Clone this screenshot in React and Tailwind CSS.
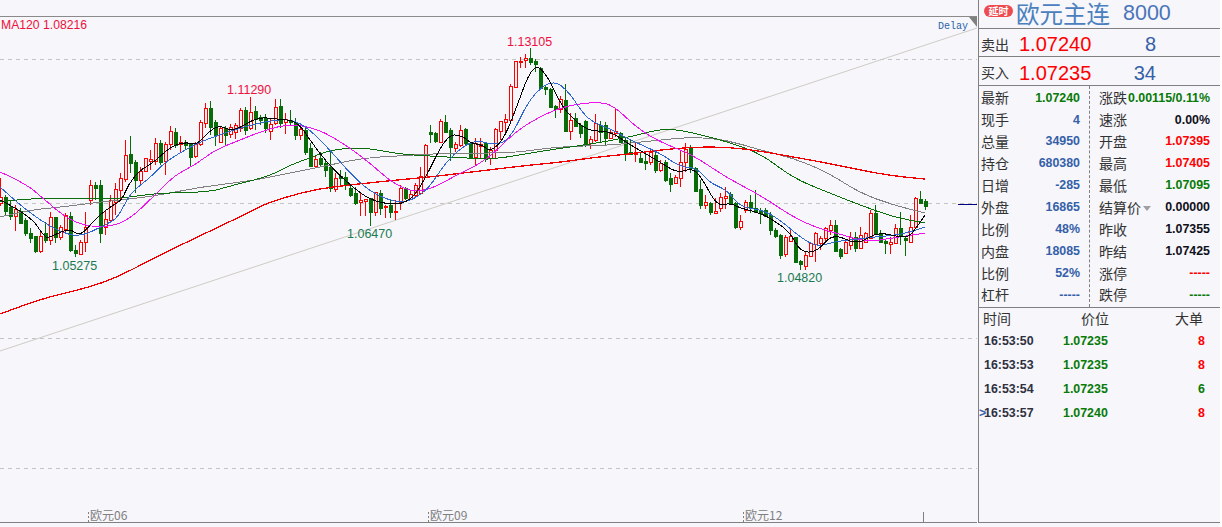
import React from 'react';

const BG = '#f6f6fb';
const RED = '#ff0000';
const GREEN = '#086c08';

// [r/g, wick top, body top, body bottom, wick bottom], one every 5px from x=0
const candles = [
  ['r',178,197,203,206],['g',195,197,211,215],['g',200,207,216,220],['r',205,209,216,231],['g',208,211,223,224],
  ['g',218,220,233,236],['g',228,233,238,243],['g',236,236,251,253],['r',230,236,251,253],['g',222,233,240,243],
  ['r',212,217,240,245],['g',217,217,237,243],['r',225,227,237,240],['r',213,215,229,232],['g',212,216,250,252],
  ['g',245,250,253,257],['r',240,242,254,254],['r',212,227,242,252],['r',180,185,200,205],['g',182,185,188,200],
  ['g',180,185,233,243],['r',210,219,227,235],['r',195,200,220,222],['r',183,189,202,215],['r',173,178,190,200],
  ['r',140,155,179,182],['g',136,154,163,173],['g',160,162,180,193],['r',167,171,180,186],['r',158,158,171,172],
  ['r',150,159,161,170],['r',138,143,161,165],['g',140,143,162,165],['r',142,144,161,175],['r',126,131,144,150],
  ['g',128,132,145,148],['r',136,142,144,152],['g',140,142,145,150],['g',143,144,157,166],['r',142,144,156,158],
  ['r',120,122,144,146],['r',103,108,123,128],['g',101,108,127,135],['g',120,122,135,146],['r',126,128,142,143],
  ['g',126,128,135,145],['r',124,127,134,138],['r',123,125,132,139],['r',108,110,128,132],['g',107,110,130,135],
  ['r',97,112,128,130],['g',106,111,119,130],['g',115,117,120,125],['g',114,118,128,133],['r',118,124,131,140],
  ['r',99,107,123,125],['g',99,106,123,128],['r',113,119,122,134],['g',110,120,122,125],['g',118,122,135,140],
  ['r',126,129,135,140],['g',126,130,152,155],['g',143,148,166,167],['r',155,159,166,167],['g',152,158,164,167],
  ['g',160,163,170,177],['g',152,167,188,192],
  ['r',173,178,189,192],['g',170,176,178,187],['g',172,177,185,190],['g',185,188,195,197],['g',187,193,203,205],
  ['r',193,200,202,216],['r',199,199,201,216],['g',198,198,212,226],['r',192,192,212,216],['g',190,193,208,215],
  ['r',205,206,207,218],['g',199,205,212,218],['r',200,211,212,220],['r',185,188,202,210],['g',187,188,198,200],
  ['r',190,194,199,200],['r',183,185,195,197],['r',167,176,193,195],['r',144,145,177,178],['g',125,132,134,143],
  ['g',132,133,141,143],['r',119,121,142,143],['g',115,122,132,133],['g',128,130,147,161],['r',142,144,148,152],
  ['r',125,130,145,147],['g',128,129,143,145],['g',142,143,157,158],['r',138,143,157,165],['r',138,144,146,158],
  ['g',143,143,159,162],['r',147,150,158,165],['r',128,129,150,158],['r',121,121,131,140],['r',114,119,122,133],
  ['r',84,86,120,121],['r',61,61,87,88],['r',57,61,62,68],['r',54,58,60,68],['g',48,58,62,65],
  ['g',59,61,64,72],['g',67,68,88,89],['g',85,87,89,95],['g',88,89,107,108],['g',105,106,109,118],
  ['r',96,99,109,113],['g',84,100,131,132],['r',113,120,131,140],['g',113,118,126,127],['g',123,125,133,138],
  ['g',120,121,143,147],['r',136,139,143,149],['r',114,123,140,142],['g',121,125,132,143],['g',122,125,138,145],
  ['r',129,132,138,139],['r',109,131,133,137],['g',132,133,142,143],['g',138,140,153,161],['g',140,152,154,155],
  ['r',143,152,154,162],['g',153,158,162,163],['g',152,161,163,170],['r',150,152,162,165],['g',152,155,170,173],
  ['r',160,163,170,172],['g',160,162,180,182],['g',173,178,184,192],['r',175,177,183,184],['r',150,162,178,187],
  ['r',143,149,162,172],['g',145,148,168,173],['g',167,168,191,191],['g',180,189,205,209],['r',195,202,205,209],
  ['g',202,203,212,215],['r',198,211,213,213],['r',193,197,208,212],['r',187,196,198,209],['g',192,194,204,205],
  ['g',202,203,227,229],['r',215,221,227,230],['r',200,202,210,213],['g',195,202,207,213],['g',190,208,212,213],
  ['g',208,211,213,224],['g',208,210,216,217],['g',212,215,230,235],['g',228,230,236,238],['g',234,235,255,259],
  ['r',235,237,254,257],['r',230,236,241,242],['g',237,237,262,262],['g',260,261,264,270],['r',252,255,266,270],
  ['r',242,243,256,257],['r',232,233,244,262],['r',236,238,243,250],['r',227,228,238,243],['r',220,225,230,235],
  ['g',220,225,251,252],['g',248,249,256,259],['r',241,242,253,253],['r',232,237,245,250],['g',232,237,248,252],
  ['r',227,235,248,249],['r',232,233,242,243],['r',210,213,238,239],['g',205,213,234,235],['g',230,234,242,243],
  ['g',240,241,243,254],['r',237,242,244,254],['r',224,228,243,243],['g',212,228,236,245],['g',237,238,240,256],
  ['r',215,227,242,243],['r',197,198,227,227],['g',191,199,203,203],['g',199,201,206,210],
];

// rounds the corners: quadratic curve through the midpoints
const curve = (p) => {
  let d = `M${p[0][0]} ${p[0][1]}`;
  for (let i = 1; i < p.length - 1; i++) {
    const mx = (p[i][0] + p[i + 1][0]) / 2;
    const my = (p[i][1] + p[i + 1][1]) / 2;
    d += ` Q${p[i][0]} ${p[i][1]} ${mx} ${my}`;
  }
  const last = p[p.length - 1];
  return `${d} L${last[0]} ${last[1]}`;
};

const ma120 = [[0,314],[40,299],[75,291],[112,280],[160,255],[210,231],[250,212],[267,203],[300,193],[330,187],[397,180],[430,177],[463,173],[497,169],[530,165],[563,162],[597,157],[630,154],[660,150],[693,147],[727,147],[760,151],[793,157],[827,163],[860,170],[893,176],[925,179]];
const maGray = [[0,217],[30,210],[62,207],[100,202],[150,197],[200,187],[250,181],[280,175],[330,165],[363,158],[397,156],[430,154],[463,153],[513,153],[547,148],[580,146],[613,145],[660,140],[693,137],[727,140],[760,150],[793,158],[827,172],[860,193],[893,205],[925,213]];
const maGreen = [[0,202],[13,200],[50,198],[70,198],[85,199],[110,199],[130,197],[160,193],[210,192],[230,186],[270,176],[290,165],[310,158],[330,150],[363,147],[397,154],[430,156],[463,158],[497,159],[530,153],[563,148],[597,143],[630,137],[660,129],[680,130],[710,137],[727,142],[760,153],[793,178],[827,192],[860,205],[893,217],[925,223]];
const maPink = [[0,172],[25,183],[45,200],[65,217],[85,226],[110,227],[130,219],[155,195],[175,175],[195,165],[215,150],[240,140],[265,130],[290,124],[310,127],[330,135],[363,157],[397,187],[423,193],[457,175],[487,160],[517,130],[547,113],[570,105],[597,102],[613,105],[637,128],[660,142],[693,155],[727,178],[760,195],[793,217],[817,228],[843,235],[867,242],[893,238],[925,233]];
const maBlue = [[0,187],[20,205],[40,220],[60,232],[80,237],[105,225],[118,218],[130,193],[150,178],[165,162],[190,147],[205,140],[225,133],[250,125],[285,118],[305,125],[330,150],[347,170],[370,192],[397,203],[413,200],[430,187],[447,160],[473,139],[493,145],[510,140],[530,97],[553,79],[570,93],[587,120],[613,130],[630,140],[660,153],[680,167],[697,168],[710,183],[727,190],[740,207],[763,210],[780,220],[800,237],[817,247],[833,242],[850,240],[873,237],[900,235],[925,227]];
const maBlack = [[0,200],[30,215],[45,238],[50,237],[70,228],[80,237],[97,217],[113,205],[122,200],[128,185],[140,170],[153,163],[170,147],[185,142],[197,145],[208,132],[220,125],[233,132],[257,117],[277,119],[297,121],[310,140],[327,163],[350,185],[370,200],[393,205],[410,201],[423,183],[447,134],[463,136],[470,143],[483,145],[490,152],[503,140],[513,117],[533,62],[547,75],[557,97],[567,113],[587,131],[610,131],[627,143],[660,162],[677,173],[693,168],[703,180],[717,206],[730,203],[740,208],[760,213],[773,220],[790,232],[800,252],[817,252],[833,233],[857,245],[877,232],[900,237],[910,237],[925,215]];

function Chart() {
  return (
    <svg width="977" height="527" className="block font-['Liberation_Sans',sans-serif]">
      <line x1="0" y1="16.5" x2="977" y2="16.5" stroke="#8a8a8a" />
      {[59.5, 203.5, 338.5, 468.5].map((y) => (
        <line key={y} x1="0" y1={y} x2="977" y2={y} stroke="#c4c4c4" strokeDasharray="4 4" />
      ))}
      <line x1="0" y1="351" x2="977" y2="28" stroke="#cfcbc4" />
      <polygon points="969,17 977,17 977,27" fill="#808080" />

      <g shapeRendering="crispEdges">
        {candles.map(([c, wt, bt, bb, wb], i) => {
          const x = i * 5 + 0.5;
          const col = c === 'r' ? RED : GREEN;
          return (
            <g key={i}>
              <line x1={x} y1={wt} x2={x} y2={wb} stroke={col} />
              <rect x={x - 1.5} y={bt + 0.5} width="3" height={bb - bt} fill={c === 'r' ? BG : GREEN} stroke={col} />
            </g>
          );
        })}
      </g>

      <g fill="none" shapeRendering="crispEdges">
        <path d={curve(maGray)} stroke="#808080" />
        <path d={curve(maGreen)} stroke="#0a6e0a" />
        <path d={curve(ma120)} stroke="#f00000" strokeWidth="1.3" />
        <path d={curve(maPink)} stroke="#f010f0" />
        <path d={curve(maBlue)} stroke="#2f66d0" />
        <path d={curve(maBlack)} stroke="#000000" />
      </g>

      <text x="1" y="29" fontSize="12.2" fill="#f0103c">MA120 1.08216</text>
      <text x="938" y="29" fontSize="10" fill="#2a62a8" className="font-['Liberation_Mono',monospace]">Delay</text>
      <text x="227" y="94" fontSize="12.5" fill="#f0103c">1.11290</text>
      <text x="507" y="46" fontSize="12.5" fill="#f0103c">1.13105</text>
      <text x="52" y="270" fontSize="12.5" fill="#1b7a50">1.05275</text>
      <text x="347" y="238" fontSize="12.5" fill="#1b7a50">1.06470</text>
      <text x="777" y="282" fontSize="12.5" fill="#1b7a50">1.04820</text>

      <line x1="958" y1="204.5" x2="977" y2="204.5" stroke="#000080" />

      {[[88, '欧元06'], [428, '欧元09'], [743, '欧元12']].map(([x, t]) => (
        <g key={x}>
          <line x1={x + 0.5} y1="512" x2={x + 0.5} y2="522" stroke="#808080" strokeDasharray="2 2" />
          <text x={x + 2} y="520" fontSize="12" fill="#808080" className="font-['Noto_Sans_CJK_SC',sans-serif]">{t}</text>
        </g>
      ))}
      <line x1="923.5" y1="512" x2="923.5" y2="522" stroke="#808080" />
      <line x1="0" y1="522.5" x2="977" y2="522.5" stroke="#808080" />
    </svg>
  );
}

function Cell({ label, value, color, extra }) {
  return (
    <div className="flex h-[21.9px] items-center justify-between whitespace-nowrap">
      <span className="flex items-center text-[14px] text-[#333]">
        {label}
        {extra}
      </span>
      <span className={`font-['Liberation_Sans',sans-serif] text-[12.4px] font-bold ${color}`}>{value}</span>
    </div>
  );
}

const BLUE = 'text-[#3560a8]';
const UP = 'text-[#ff0000]';
const DOWN = 'text-[#087a08]';
const BLK = 'text-[#10101a]';

const leftRows = [
  ['最新', '1.07240', DOWN], ['现手', '4', BLUE], ['总量', '34950', BLUE], ['持仓', '680380', BLUE], ['日增', '-285', BLUE],
  ['外盘', '16865', BLUE], ['比例', '48%', BLUE], ['内盘', '18085', BLUE], ['比例', '52%', BLUE], ['杠杆', '-----', BLUE],
];
const rightRows = [
  ['涨跌', '0.00115/0.11%', DOWN], ['速涨', '0.00%', BLK], ['开盘', '1.07395', UP], ['最高', '1.07405', UP], ['最低', '1.07095', DOWN],
  ['结算价', '0.00000', BLK], ['昨收', '1.07355', BLK], ['昨结', '1.07425', BLK], ['涨停', '-----', UP], ['跌停', '-----', DOWN],
];
const ticks = [
  ['16:53:50', '1.07235', '8', UP], ['16:53:53', '1.07235', '8', UP], ['16:53:54', '1.07235', '6', DOWN], ['16:53:57', '1.07240', '8', UP],
];

function QuotePanel() {
  return (
    <div className="flex h-[523px] w-[242px] flex-col border-l border-b border-[#808080] font-['Noto_Sans_CJK_SC',sans-serif]">
      <div className="flex h-[29px] items-center border-b border-[#808080] pl-[5px]">
        <span className="mb-[7px] flex h-[12px] w-[29px] items-center justify-center rounded-full bg-[#ee4b50] text-[10px] leading-none font-bold text-white">延时</span>
        <span className="ml-[3px] pb-[2px] text-[23.5px] leading-[26px] text-[#4a80bd]">欧元主连</span>
        <span className="ml-[13px] pb-[2px] font-['Liberation_Sans',sans-serif] text-[21.5px] leading-[26px] text-[#4a74b8]">8000</span>
      </div>

      <div className="flex h-[28px] items-center border-b border-[#808080] pt-[3px] pl-[2px]">
        <span className="w-[38px] text-[14px] text-[#333]">卖出</span>
        <span className="w-[84px] font-['Liberation_Sans',sans-serif] text-[20px] text-[#ff0000]">1.07240</span>
        <span className="w-[53px] text-right font-['Liberation_Sans',sans-serif] text-[20px] text-[#3560a8]">8</span>
      </div>
      <div className="flex h-[29px] items-center border-b border-[#808080] pt-[3px] pl-[2px]">
        <span className="w-[38px] text-[14px] text-[#333]">买入</span>
        <span className="w-[84px] font-['Liberation_Sans',sans-serif] text-[20px] text-[#ff0000]">1.07235</span>
        <span className="w-[53px] text-right font-['Liberation_Sans',sans-serif] text-[20px] text-[#3560a8]">34</span>
      </div>

      <div className="flex h-[222px] border-b border-[#808080]">
        <div className="w-[111px] border-r border-dashed border-[#808080] pt-px pr-[9px] pl-[2px]">
          {leftRows.map(([l, v, c], i) => <Cell key={i} label={l} value={v} color={c} />)}
        </div>
        <div className="w-[120px] pt-px pl-[9px]">
          {rightRows.map(([l, v, c]) => (
            <Cell
              key={l}
              label={l}
              value={v}
              color={c}
              extra={l === '结算价' ? <span className="ml-[2px] mt-[3px] h-0 w-0 border-x-[4px] border-t-[5px] border-x-transparent border-t-[#a0a0a0]" /> : null}
            />
          ))}
        </div>
      </div>

      <div className="flex h-[21px] items-center pl-[4px] text-[14px] text-[#333]">
        <span className="w-[98px]">时间</span>
        <span className="w-[94px]">价位</span>
        <span>大单</span>
      </div>
      {ticks.map(([t, p, n, c], i) => (
        <div key={t} className="relative flex h-[24px] items-center pl-[5px] font-['Liberation_Sans',sans-serif] text-[12.4px] font-bold">
          {i === 3 && <span className="absolute left-0 text-[#3560a8]">&gt;</span>}
          <span className="w-[79px] text-[#303040]">{t}</span>
          <span className="w-[60px] text-[#087a08]">{p}</span>
          <span className={`w-[82px] text-right ${c}`}>{n}</span>
        </div>
      ))}
    </div>
  );
}

export default function App() {
  return (
    <div className="flex h-[527px] w-[1220px] bg-[#f6f6fb]">
      <div className="w-[978px] shrink-0 overflow-hidden">
        <Chart />
      </div>
      <QuotePanel />
    </div>
  );
}
